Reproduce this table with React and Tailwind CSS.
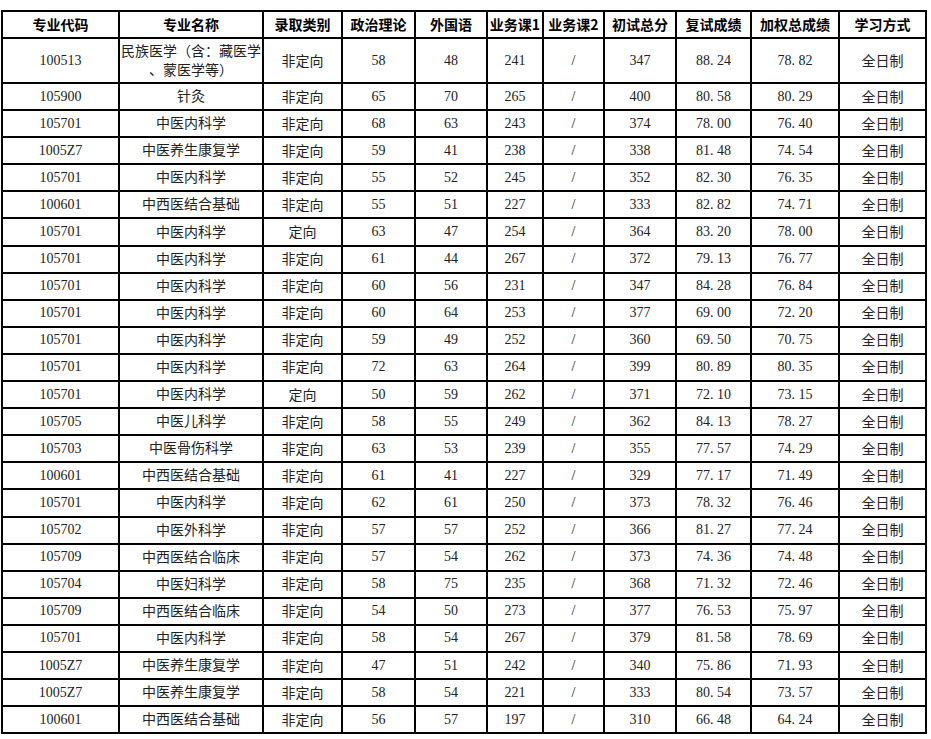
import React from 'react';

const headers = ['专业代码', '专业名称', '录取类别', '政治理论', '外国语', '业务课1', '业务课2', '初试总分', '复试成绩', '加权总成绩', '学习方式'];
const widths = ['w-[117px]', 'w-[144px]', 'w-[79px]', 'w-[73px]', 'w-[72px]', 'w-[56px]', 'w-[61px]', 'w-[72px]', 'w-[75px]', 'w-[88px]', 'w-[87px]'];

// code, name, type, politics, language, course1, total, retest, weighted
const rows = [
  ['100513', '民族医学（含：藏医学|、蒙医学等）', '非定向', '58', '48', '241', '347', '88.24', '78.82'],
  ['105900', '针灸', '非定向', '65', '70', '265', '400', '80.58', '80.29'],
  ['105701', '中医内科学', '非定向', '68', '63', '243', '374', '78.00', '76.40'],
  ['1005Z7', '中医养生康复学', '非定向', '59', '41', '238', '338', '81.48', '74.54'],
  ['105701', '中医内科学', '非定向', '55', '52', '245', '352', '82.30', '76.35'],
  ['100601', '中西医结合基础', '非定向', '55', '51', '227', '333', '82.82', '74.71'],
  ['105701', '中医内科学', '定向', '63', '47', '254', '364', '83.20', '78.00'],
  ['105701', '中医内科学', '非定向', '61', '44', '267', '372', '79.13', '76.77'],
  ['105701', '中医内科学', '非定向', '60', '56', '231', '347', '84.28', '76.84'],
  ['105701', '中医内科学', '非定向', '60', '64', '253', '377', '69.00', '72.20'],
  ['105701', '中医内科学', '非定向', '59', '49', '252', '360', '69.50', '70.75'],
  ['105701', '中医内科学', '非定向', '72', '63', '264', '399', '80.89', '80.35'],
  ['105701', '中医内科学', '定向', '50', '59', '262', '371', '72.10', '73.15'],
  ['105705', '中医儿科学', '非定向', '58', '55', '249', '362', '84.13', '78.27'],
  ['105703', '中医骨伤科学', '非定向', '63', '53', '239', '355', '77.57', '74.29'],
  ['100601', '中西医结合基础', '非定向', '61', '41', '227', '329', '77.17', '71.49'],
  ['105701', '中医内科学', '非定向', '62', '61', '250', '373', '78.32', '76.46'],
  ['105702', '中医外科学', '非定向', '57', '57', '252', '366', '81.27', '77.24'],
  ['105709', '中西医结合临床', '非定向', '57', '54', '262', '373', '74.36', '74.48'],
  ['105704', '中医妇科学', '非定向', '58', '75', '235', '368', '71.32', '72.46'],
  ['105709', '中西医结合临床', '非定向', '54', '50', '273', '377', '76.53', '75.97'],
  ['105701', '中医内科学', '非定向', '58', '54', '267', '379', '81.58', '78.69'],
  ['1005Z7', '中医养生康复学', '非定向', '47', '51', '242', '340', '75.86', '71.93'],
  ['1005Z7', '中医养生康复学', '非定向', '58', '54', '221', '333', '80.54', '73.57'],
  ['100601', '中西医结合基础', '非定向', '56', '57', '197', '310', '66.48', '64.24'],
];

// SimSun-style decimal: the point takes a full half-width cell
const Num = ({ v }) => {
  const [a, b] = v.split('.');
  if (b === undefined) return <span>{v}</span>;
  return (
    <span>
      {a}<span className="inline-block w-[7px] text-left">.</span>{b}
    </span>
  );
};

const cjk = "font-['Noto_Sans_CJK_SC',sans-serif] pb-[2px]";
const num = "font-['Liberation_Serif','Noto_Sans_CJK_SC',serif]";

export default function App() {
  return (
    <div className="bg-white w-[931px] h-[739px] pt-[10px] pl-[1px]">
      <table className="border-collapse table-fixed w-[924px] text-[14px] text-[#222] leading-[18px]">
        <colgroup>
          {widths.map((w, i) => <col key={i} className={w} />)}
        </colgroup>
        <thead>
          <tr className="h-[27px]">
            {headers.map((h) => (
              <th key={h} className={`border-2 border-black p-0 font-bold text-black text-center whitespace-nowrap ${cjk}`}>
                {h}
              </th>
            ))}
          </tr>
        </thead>
        <tbody>
          {rows.map((r, i) => {
            const [code, name, type, pol, lang, c1, total, retest, weighted] = r;
            const lines = name.split('|');
            const td = 'border-2 border-black p-0 text-center';
            return (
              <tr key={i} className={i === 0 ? 'h-[45px]' : 'h-[27.1px]'}>
                <td className={`${td} ${num}`}>{code}</td>
                <td className={`${td} ${cjk}`}>
                  {lines.map((l, j) => (
                    <div key={j} className="whitespace-nowrap leading-[19px]">{l}</div>
                  ))}
                </td>
                <td className={`${td} ${cjk}`}>{type}</td>
                <td className={`${td} ${num}`}>{pol}</td>
                <td className={`${td} ${num}`}>{lang}</td>
                <td className={`${td} ${num}`}>{c1}</td>
                <td className={`${td} ${num}`}>/</td>
                <td className={`${td} ${num}`}>{total}</td>
                <td className={`${td} ${num}`}><Num v={retest} /></td>
                <td className={`${td} ${num}`}><Num v={weighted} /></td>
                <td className={`${td} ${cjk}`}>全日制</td>
              </tr>
            );
          })}
        </tbody>
      </table>
    </div>
  );
}
